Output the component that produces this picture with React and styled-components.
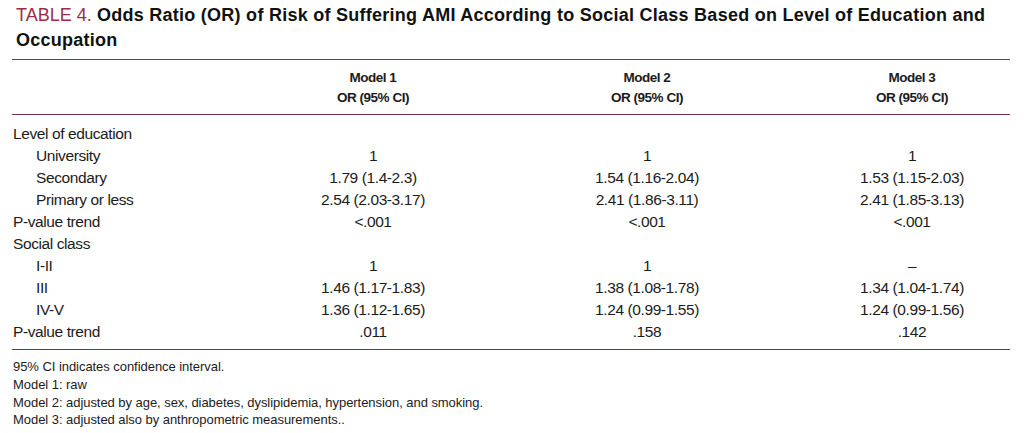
import styled, { createGlobalStyle } from 'styled-components';

const GlobalStyle = createGlobalStyle`
  body {
    margin: 0;
    background: #fff;
    color: #1b1b1b;
    font-family: "Liberation Sans", Arial, sans-serif;
  }
`;

const rows = [
  { label: 'Level of education', values: ['', '', ''] },
  { label: 'University', indent: true, values: ['1', '1', '1'] },
  { label: 'Secondary', indent: true, values: ['1.79 (1.4-2.3)', '1.54 (1.16-2.04)', '1.53 (1.15-2.03)'] },
  { label: 'Primary or less', indent: true, values: ['2.54 (2.03-3.17)', '2.41 (1.86-3.11)', '2.41 (1.85-3.13)'] },
  { label: 'P-value trend', values: ['<.001', '<.001', '<.001'] },
  { label: 'Social class', values: ['', '', ''] },
  { label: 'I-II', indent: true, values: ['1', '1', '–'] },
  { label: 'III', indent: true, values: ['1.46 (1.17-1.83)', '1.38 (1.08-1.78)', '1.34 (1.04-1.74)'] },
  { label: 'IV-V', indent: true, values: ['1.36 (1.12-1.65)', '1.24 (0.99-1.55)', '1.24 (0.99-1.56)'] },
  { label: 'P-value trend', values: ['.011', '.158', '.142'] },
];

const notes = [
  '95% CI indicates confidence interval.',
  'Model 1: raw',
  'Model 2: adjusted by age, sex, diabetes, dyslipidemia, hypertension, and smoking.',
  'Model 3: adjusted also by anthropometric measurements..',
];

function App() {
  return (
    <Page>
      <GlobalStyle />
      <Title>
        <Tag>TABLE 4.</Tag> <b>Odds Ratio (OR) of Risk of Suffering AMI According to Social Class Based on Level of Education and Occupation</b>
      </Title>
      <Table>
        <HeadRow>
          <div />
          {[1, 2, 3].map((n) => (
            <HeadCell key={n}>
              Model {n}
              <br />
              OR (95% CI)
            </HeadCell>
          ))}
        </HeadRow>
        <Body>
          {rows.map((r, i) => (
            <Row key={i}>
              <Label $indent={r.indent}>{r.label}</Label>
              {r.values.map((v, j) => (
                <Value key={j}>{v}</Value>
              ))}
            </Row>
          ))}
        </Body>
      </Table>
      <Notes>
        {notes.map((n) => (
          <div key={n}>{n}</div>
        ))}
      </Notes>
    </Page>
  );
}

const Page = styled.div`
  width: 998px;
  padding: 3px 0 0 12px;
`;

const Title = styled.div`
  padding-left: 4px;
  font-size: 18px;
  line-height: 25px;
  letter-spacing: 0.26px;
  color: #111;
  margin-bottom: 6px;

  b {
    font-weight: 700;
  }
`;

const Tag = styled.span`
  color: #9e2c48;
  letter-spacing: 0;
`;

const Table = styled.div`
  border-top: 1px solid #7a3344;
  border-bottom: 1px solid #7a3344;
`;

const Grid = styled.div`
  display: grid;
  grid-template-columns: 224px 274px 274px 226px;

  & > :nth-child(4) {
    padding-left: 30px;
  }
`;

const HeadRow = styled(Grid)`
  padding: 8px 0 6px;
  border-bottom: 1px solid #7a3344;
`;

const HeadCell = styled.div`
  text-align: center;
  font-weight: 700;
  font-size: 13.5px;
  line-height: 20px;
  letter-spacing: -0.5px;
`;

const Body = styled.div`
  padding: 8px 0 6px;
`;

const Row = styled(Grid)`
  font-size: 15.5px;
  line-height: 22px;
  letter-spacing: -0.4px;
`;

const Label = styled.div`
  padding-left: ${(p) => (p.$indent ? '24px' : '1px')};
  white-space: nowrap;
`;

const Value = styled.div`
  text-align: center;
  white-space: nowrap;
`;

const Notes = styled.div`
  padding: 8px 0 0 1px;
  font-size: 13px;
  line-height: 17.8px;
  letter-spacing: -0.05px;
`;

export default App;
